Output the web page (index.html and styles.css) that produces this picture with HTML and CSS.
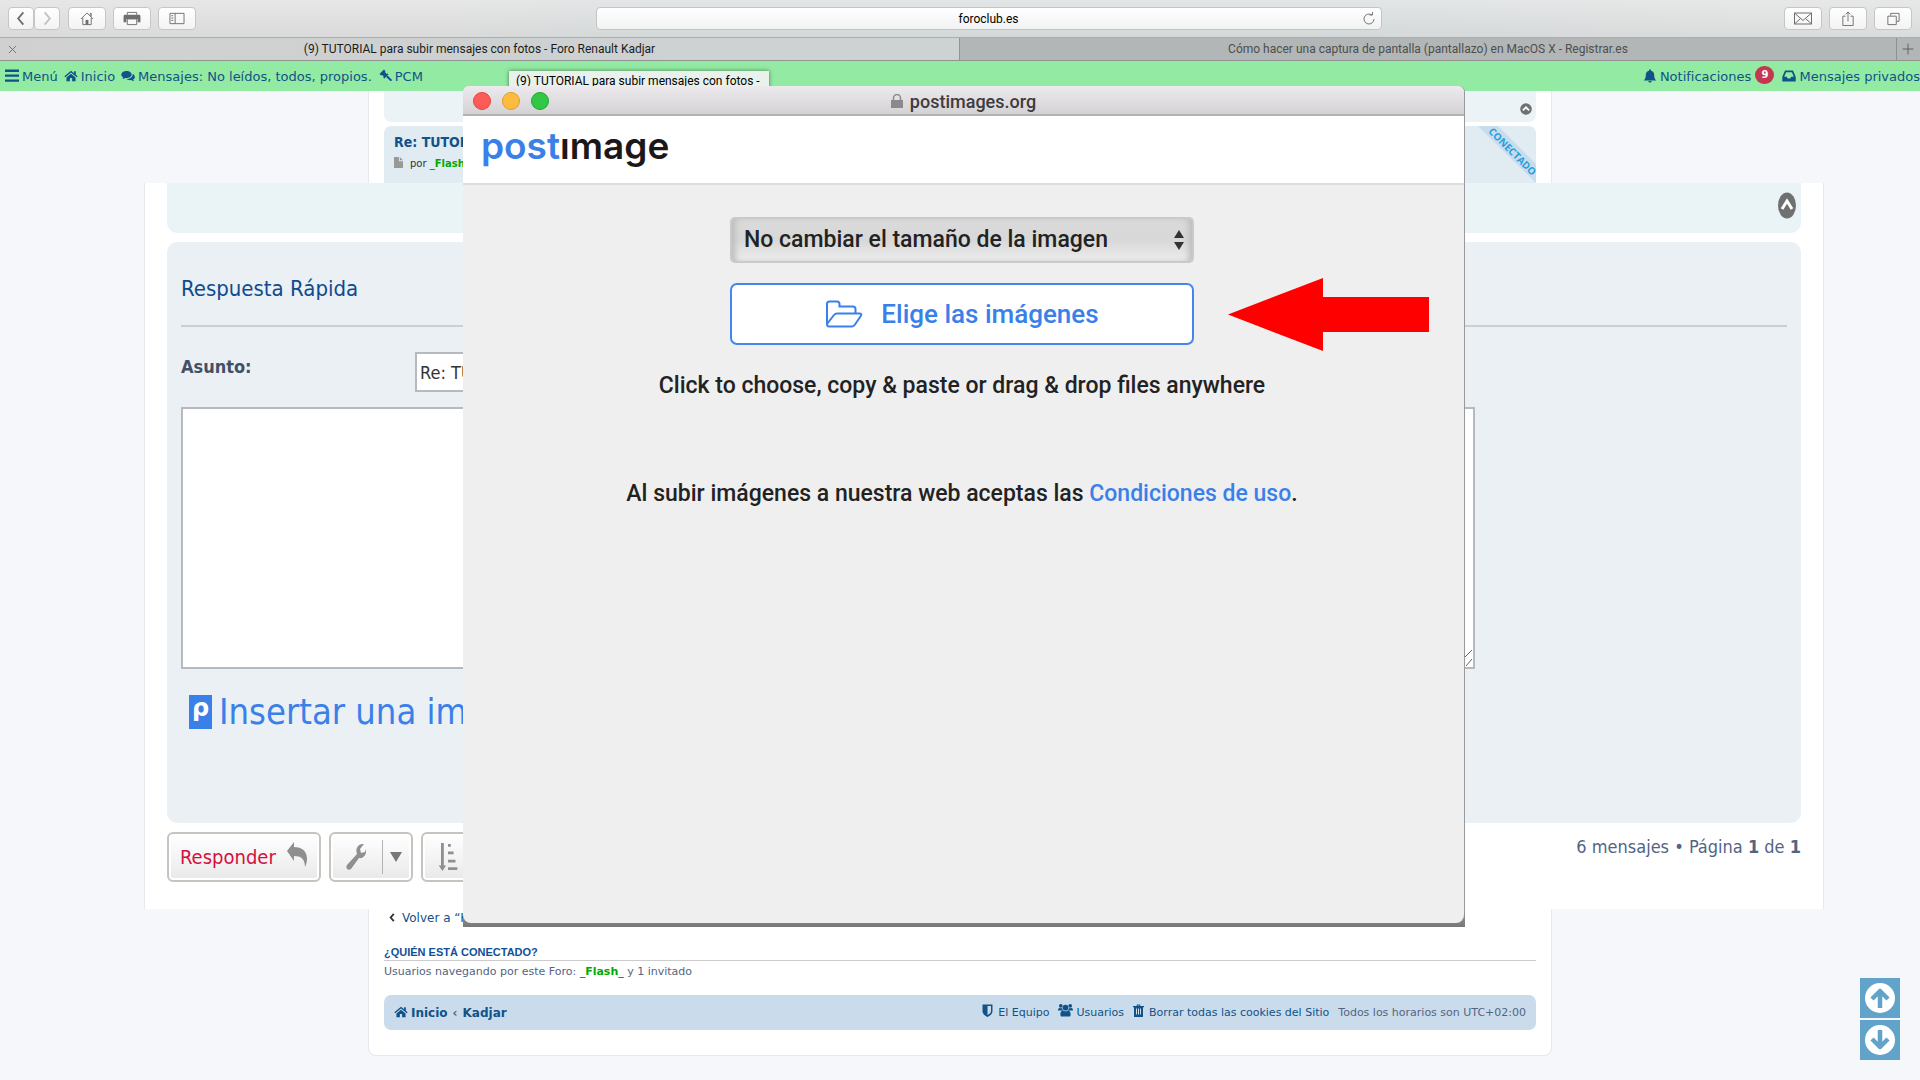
FILE: index.html
```html
<!DOCTYPE html>
<html lang="es">
<head>
    <meta charset="utf-8">
    <title>(9) TUTORIAL para subir mensajes con fotos - Foro Renault Kadjar</title>
    <link rel="stylesheet" href="styles.css">
</head>
<body>
    <!-- shared icons -->
    <svg class="sprite" aria-hidden="true">
        <symbol id="i-home" viewBox="0 0 16 14"><path d="M8 1 0.400 7.400l1 1.100L8 3.100l6.600 5.400 1-1.100L13.500 5.600V1.500h-2v2.400zM8 4.300 2.800 8.600V13h3.900V9.400h2.600V13h3.900V8.600z"/></symbol>
        <symbol id="i-comments" viewBox="0 0 18 15"><path d="M7 1C3.200 1 0.300 3 0.300 5.700c0 1.500 1 2.900 2.500 3.700-.2.900-.8 1.500-1.300 2 1.500 0 2.800-.6 3.800-1.300.5.100 1.100.2 1.700.2 3.800 0 6.700-2 6.700-4.600S10.800 1 7 1z"/><path d="M14.800 4.500c.1.400.2.800.2 1.200 0 3.300-3.500 5.800-8 5.800 1.100.9 2.700 1.400 4.400 1.400.6 0 1.100-.1 1.700-.2 1 .8 2.300 1.300 3.800 1.400-.6-.6-1-1.200-1.300-2 1.400-.8 2.200-2 2.200-3.300 0-1.800-1.200-3.400-3-4.300z"/></symbol>
        <symbol id="i-gavel" viewBox="0 0 16 16"><path d="M6.800.6 8.500 2.300 8 3.500l2 2.100 1.100-.5.900.9-5 5-.9-1 .5-1.100-2-2-1.200.4L1.700 5.600zM9.300 9l1.700-1.600 4.500 4.500c.5.500.4 1.100 0 1.500-.5.500-1.100.5-1.600 0z"/></symbol>
        <symbol id="i-bell" viewBox="0 0 14 15"><path d="M7 .4c.6 0 1 .4 1 1v.4c2.300.5 3.500 2.300 3.500 4.700 0 3 .7 4.500 2.200 5.700H.3c1.500-1.200 2.200-2.700 2.200-5.700C2.500 4.100 3.700 2.300 6 1.800v-.4c0-.6.4-1 1-1zM5.200 12.800h3.600c-.2 1-.9 1.700-1.800 1.700s-1.600-.7-1.800-1.700z"/></symbol>
        <symbol id="i-inbox" viewBox="0 0 14 12"><path fill-rule="evenodd" d="M3 .5h8l2.700 6.300V11.500H.3V6.800zM4.100 2.200 2.200 6.800h2.600l.9 1.700h2.600l.9-1.700h2.600L9.900 2.200z"/></symbol>
        <symbol id="i-up" viewBox="0 0 14 14"><circle cx="7" cy="7" r="6.800"/><path d="m3.400 8.600 3.600-3.600 3.600 3.600" fill="none" stroke="#fff" stroke-width="2.200"/></symbol>
        <symbol id="i-arrow" viewBox="0 0 30 30"><circle cx="15" cy="15" r="15" fill="#fff"/><path d="M15 25V8M7 16l8-8 8 8" fill="none" stroke="#62a3ca" stroke-width="4.500" stroke-linejoin="round"/></symbol>
    </svg>

    <header class="browser">
        <div class="toolbar">
            <div class="tools">
                <div class="pair">
                    <button class="tool back" aria-label="Atrás"><svg viewBox="0 0 10 16"><path d="M7.500 1.500 2 8l5.500 6.500"/></svg></button>
                    <button class="tool forward" aria-label="Adelante"><svg viewBox="0 0 10 16"><path d="M2.500 1.500 8 8l-5.500 6.500"/></svg></button>
                </div>
                <button class="tool" aria-label="Inicio"><svg viewBox="0 0 16 16"><path d="M1.500 8.500 8 2l6.500 6.500M3.500 7v7.500h9V7M11.500 5V2.500h1V6"/><path class="fill" d="M6.500 9.500h3v5h-3z"/></svg></button>
                <button class="tool" aria-label="Imprimir"><svg class="wide" viewBox="0 0 18 16"><path d="M4 4V1.500h10V4"/><path class="fill" d="M1.500 4h15c.8 0 1.500.7 1.500 1.500V12h-3V8.500H3V12H0V5.500C0 4.700.7 4 1.500 4z"/><path d="M4 8.500h10v6H4z"/></svg></button>
                <button class="tool" aria-label="Barra lateral"><svg viewBox="0 0 16 16"><path d="M.5 2.500h15v11H.5zM6 2.500v11M2 5h2M2 7.500h2M2 10h2"/></svg></button>
            </div>
            <label class="address">
                <input type="text" value="foroclub.es" aria-label="Dirección">
                <svg viewBox="0 0 14 14"><path d="M12 7a5 5 0 1 1-2-4M7.500 3h3V0"/></svg>
            </label>
            <div class="tools right">
                <button class="tool" aria-label="Correo"><svg class="wide" viewBox="0 0 18 14"><path d="M.5 1.500h17v11H.5zM.5 1.500 9 9l8.500-7.500M.5 12.500 6.500 7M17.500 12.500l-6-5.500"/></svg></button>
                <button class="tool" aria-label="Compartir"><svg viewBox="0 0 16 16"><path d="M5.500 5.500h-3v10h11v-10h-3M8 11V1M5.500 3.500 8 1l2.500 2.500"/></svg></button>
                <button class="tool" aria-label="Pestañas"><svg viewBox="0 0 16 16"><path d="M2.500 5.500h9v9h-9zM5.500 5V2.500h9v8.500H12"/></svg></button>
            </div>
        </div>
        <nav class="tabs">
            <a class="tab active" href="#"><svg class="close" viewBox="0 0 10 10"><path d="m1 1 8 8M9 1 1 9"/></svg>(9) TUTORIAL para subir mensajes con fotos - Foro Renault Kadjar</a>
            <a class="tab" href="#">Cómo hacer una captura de pantalla (pantallazo) en MacOS X - Registrar.es</a>
            <button class="new-tab" aria-label="Nueva pestaña"><svg viewBox="0 0 12 12"><path d="M6 .5v11M.5 6h11"/></svg></button>
        </nav>
    </header>

    <nav class="forum-bar">
        <div class="forum-links">
            <a href="#"><svg class="icon" viewBox="0 0 13 12"><path d="M0 0h13v2.200H0zM0 4.600h13v2.200H0zM0 9.200h13v2.200H0z"/></svg>Menú</a>
            <a href="#"><svg class="icon"><use href="#i-home"/></svg>Inicio</a>
            <span><svg class="icon"><use href="#i-comments"/></svg>Mensajes: <a href="#">No leídos</a>, <a href="#">todos</a>, <a href="#">propios</a>.</span>
            <a href="#"><svg class="icon"><use href="#i-gavel"/></svg>PCM</a>
        </div>
        <div class="forum-user">
            <a href="#"><svg class="icon"><use href="#i-bell"/></svg>Notificaciones <b class="badge">9</b></a>
            <a href="#"><svg class="icon"><use href="#i-inbox"/></svg>Mensajes privados</a>
        </div>
    </nav>

    <main>
        <section class="posts">
            <div class="post-end"><svg class="up"><use href="#i-up"/></svg></div>
            <article class="post">
                <h3><a href="#">Re: TUTORIAL</a></h3>
                <p><svg class="page" viewBox="0 0 10 12"><path d="M0 0h5.500v4.500H10V12H0zM6.500 0 10 3.500H6.500z"/></svg>por <a class="user" href="#">_Flash_</a></p>
                <svg class="ribbon" viewBox="0 0 58 57"><path d="M0 0h20l38 38v19z" fill="#c9dcec"/><text x="34" y="29" transform="rotate(45 34 26)">CONECTADO</text></svg>
            </article>
        </section>

        <section class="reply">
            <div class="reply-top"><svg class="up" viewBox="0 0 18 27"><ellipse cx="9" cy="13.500" rx="9" ry="13"/><path d="m4 17 5-8 5 8" fill="none" stroke="#fff" stroke-width="3"/></svg></div>
            <form class="quick">
                <h2>Respuesta Rápida</h2>
                <div class="subject">
                    <label for="subject">Asunto:</label>
                    <input id="subject" type="text" value="Re: TUTORIAL">
                </div>
                <div class="message">
                    <textarea aria-label="Mensaje"></textarea>
                    <svg viewBox="0 0 12 18"><path d="M1 11 11 1M5 17l6-7"/></svg>
                </div>
                <a class="insert" href="#"><span class="mark">ρ</span>Insertar una imagen</a>
            </form>
            <div class="actions">
                <button class="action answer">Responder<svg viewBox="0 0 20 26"><path d="M0 9 7 0v5c8 0 13 4 13 12 0 3-1 6-2 8 0-8-4-11-11-11v5z"/></svg></button>
                <button class="action tools-menu" aria-label="Herramientas"><svg viewBox="0 0 20 28"><path d="M1 22 11 11C9 6 12 0 18 1l-4 5 1 4 4-1 1-3c1 6-3 10-7 9L5 26c-3 2-6-1-4-4z"/></svg><span class="caret"></span></button>
                <button class="action" aria-label="Ordenar"><svg viewBox="0 0 20 30"><path d="M2.500 0h3v24H8l-4 6-4-6h2.500zM10 1h3v3h-3zM10 9h6v3h-6zM10 18h8v3h-8zM10 26h10v3H10z"/></svg></button>
                <p class="pages">6 mensajes • Página <b>1</b> de <b>1</b></p>
            </div>
        </section>

        <section class="bottom">
            <p class="return"><svg viewBox="0 0 6 10"><path d="M5 1 1.500 5 5 9"/></svg><a href="#">Volver a “Kadjar”</a></p>
            <h3>¿QUIÉN ESTÁ CONECTADO?</h3>
            <p class="online">Usuarios navegando por este Foro: <a class="user" href="#">_Flash_</a> y 1 invitado</p>
            <footer class="foot">
                <div class="crumbs"><a href="#"><svg class="icon"><use href="#i-home"/></svg>Inicio</a><span>‹</span><a href="#">Kadjar</a></div>
                <div class="foot-links">
                    <a href="#"><svg viewBox="0 0 10 13"><path fill-rule="evenodd" d="M0 .5h10V7c0 3-2.500 4.700-5 6-2.500-1.300-5-3-5-6zM5 2v9c2-1 3.500-2.300 3.500-4V2z"/></svg>El Equipo</a>
                    <a href="#" class="members"><svg viewBox="0 0 16 14"><circle cx="3" cy="2.500" r="2"/><circle cx="13" cy="2.500" r="2"/><circle cx="8" cy="4.500" r="3"/><path d="M0 7.500C0 5.500.7 4.500 2 4.800c.8.500 1.700.4 2.400 0C4.500 6 5 6.800 5.300 7.500zM16 7.500c0-2-.7-3-2-2.700-.8.500-1.700.4-2.400 0-.1 1.200-.6 2-.9 2.700zM2.500 12c0-2.500.8-4.500 3-4.500 1.500 1.200 3.500 1.200 5 0 2.200 0 3 2 3 4.500 0 1.300-.8 2-2 2h-7c-1.200 0-2-.7-2-2z"/></svg>Usuarios</a>
                    <a href="#"><svg viewBox="0 0 11 13"><path fill-rule="evenodd" d="M3.500 2 4 .5h3L7.500 2H11v1.200h-1V13H1V3.200H0V2zM4.700 2h1.600l-.2-.5H4.900zM3 4.500v6h1v-6zM5 4.500v6h1v-6zM7 4.500v6h1v-6z"/></svg>Borrar todas las cookies del Sitio</a>
                    <span>Todos los horarios son UTC+02:00</span>
                </div>
            </footer>
        </section>
    </main>

    <div class="tooltip">(9) TUTORIAL para subir mensajes con fotos -</div>

    <!-- image upload window -->
    <div class="popup">
        <div class="window">
            <div class="titlebar">
                <span class="lights"><i class="red"></i><i class="yellow"></i><i class="green"></i></span>
                <span class="site"><svg viewBox="0 0 12 14"><path d="M0 6h12v8H0z"/><path d="M2.500 6.500V4a3.500 3.500 0 0 1 7 0v2.500" fill="none" stroke="#8b898b" stroke-width="1.500"/></svg>postimages.org</span>
            </div>
            <div class="brand"><a href="#"><span>post</span>ımage</a></div>
            <div class="upload">
                <label class="resize">
                    <select aria-label="Tamaño de la imagen"><option>No cambiar el tamaño de la imagen</option></select>
                    <svg viewBox="0 0 10 20"><path d="M5 0l5 8H0zM5 20l5-8H0z"/></svg>
                </label>
                <button class="choose"><svg viewBox="0 0 38 28"><path d="M2 24V4c0-1.500.8-2.500 2.500-2.500h7.500c1.500 0 2.500 1 2.500 2.500v2.500H28c1.500 0 2.500 1 2.500 2.500v4.500M2 24l7-9c.8-1 1.500-1.500 3-1.500h22.500c1.800 0 2.300 1 1.300 2.500L30 24.500c-.8 1.200-1.500 2-3 2H4c-1.500 0-2-1-2-2.500z"/></svg>Elige las imágenes</button>
                <p>Click to choose, copy &amp; paste or drag &amp; drop files anywhere</p>
                <p class="terms">Al subir imágenes a nuestra web aceptas las <a href="#">Condiciones de uso</a>.</p>
            </div>
            <svg class="pointer" viewBox="0 0 201 73"><path d="M0 36.500 95 0v19h106v35H95v19z"/></svg>
        </div>
    </div>

    <div class="scroll-links">
        <a href="#" aria-label="Subir"><svg><use href="#i-arrow"/></svg></a>
        <a href="#" aria-label="Bajar" class="down"><svg><use href="#i-arrow"/></svg></a>
    </div>
</body>
</html>
```

FILE: styles.css
```css
* {
    box-sizing: border-box;
}
body {
    margin: 0;
    min-height: 100vh;
    overflow: hidden;
    position: relative;
    background: #f5f7fa;
    color: #536482;
    font-family: "DejaVu Sans", sans-serif;
    font-size: 11px;
}
a {
    color: #105289;
    text-decoration: none;
}
p, h2, h3 {
    margin: 0;
}
button, input, select, textarea {
    font: inherit;
    color: inherit;
}
.sprite {
    position: absolute;
    width: 0;
    height: 0;
}
.icon {
    width: 14px;
    height: 14px;
    fill: #105289;
    vertical-align: -2px;
    margin-right: 3px;
}
.user {
    color: #00aa00;
    font-weight: bold;
}

/* browser */
.browser {
    font-family: Roboto, sans-serif;
    font-size: 12px;
}
.toolbar {
    display: grid;
    grid-template-columns: 1fr 786px 530px;
    align-items: center;
    height: 37px;
    padding: 0 8px;
    background: linear-gradient(rgba(255, 255, 255, 0.35), rgba(255, 255, 255, 0)), linear-gradient(90deg, #dadada 0%, #dadada 22%, #d3d8d9 35%, #d3d8d9 70%, #dadbdb 90%);
}
.tools {
    display: flex;
    gap: 7px;
}
.tools.right {
    justify-content: flex-end;
}
.pair {
    display: flex;
    margin-right: 1px;
}
.tool {
    display: flex;
    align-items: center;
    justify-content: center;
    width: 38px;
    height: 23px;
    padding: 0;
    border: 1px solid #c5c7c7;
    border-radius: 4px;
    background: linear-gradient(#ffffff, #f3f3f3);
}
.pair .tool {
    width: 26px;
}
.tool svg {
    width: 16px;
    height: 15px;
    fill: none;
    stroke: #6e6e6e;
}
.tool svg.wide {
    width: 18px;
}
.tool .fill {
    fill: #6e6e6e;
    stroke: none;
}
.tool.back svg {
    stroke-width: 2;
}
.tool.forward svg {
    stroke: #c2c2c2;
    stroke-width: 2;
}
.address {
    display: flex;
    align-items: center;
    height: 23px;
    padding-right: 5px;
    border: 1px solid #c2c6c6;
    border-radius: 4px;
    background: linear-gradient(#ffffff, #f1f2f2);
}
.address input {
    flex: 1;
    min-width: 0;
    padding: 0 0 0 18px;
    border: 0;
    background: none;
    color: #000;
    text-align: center;
}
.address svg {
    width: 14px;
    height: 14px;
    fill: none;
    stroke: #777;
}
.tabs {
    display: flex;
    height: 24px;
    border-top: 1px solid #abaeae;
    border-bottom: 1px solid #919494;
    background: #b2b6b6;
}
.tab {
    flex: 1;
    position: relative;
    line-height: 23px;
    text-align: center;
    color: #4c4f4f;
}
.tab.active {
    flex: 0 0 50%;
    border-right: 1px solid #909494;
    background: linear-gradient(90deg, #d0d0d0, #cdd2d2);
    color: #1c1c1c;
}
.close {
    position: absolute;
    left: 8px;
    top: 7px;
    width: 9px;
    height: 9px;
    stroke: #6c6c6c;
}
.new-tab {
    width: 24px;
    padding: 0 5px;
    border: 0;
    border-left: 1px solid #8e9191;
    background: none;
}
.new-tab svg {
    display: block;
    width: 12px;
    height: 12px;
    stroke: #606262;
}

/* forum top bar */
.forum-bar {
    display: flex;
    justify-content: space-between;
    height: 30px;
    line-height: 32px;
    padding-left: 5px;
    background: #93eaa3;
    color: #105289;
    font-size: 13px;
    white-space: nowrap;
}
.forum-links {
    display: flex;
    gap: 6px;
}
.forum-user {
    display: flex;
    gap: 8px;
    flex: 0 0 268px;
}
.badge {
    display: inline-block;
    width: 19px;
    height: 18px;
    border-radius: 9px;
    background: #c4384f;
    color: #fff;
    font-size: 10px;
    line-height: 18px;
    text-align: center;
    vertical-align: 3px;
}

/* last posts */
.posts {
    max-width: 1184px;
    height: 92px;
    margin: 0 auto;
    padding: 0 15px;
    border: solid #e6e9ed;
    border-width: 0 1px;
    background: #fff;
}
.post-end {
    display: flex;
    justify-content: flex-end;
    height: 31px;
    padding: 12px 4px 0;
    border-radius: 0 0 7px 7px;
    background: #ebf3f7;
}
.post-end .up {
    width: 12px;
    height: 12px;
    fill: #707070;
}
.post {
    position: relative;
    height: 57px;
    margin-top: 4px;
    padding: 7px 10px;
    border-radius: 7px 7px 0 0;
    background: #e1ebf2;
    color: #333;
    font-size: 10px;
}
.post h3 {
    font-family: "DejaVu Sans Condensed", "DejaVu Sans", sans-serif;
    font-size: 14px;
    line-height: 18px;
    margin-bottom: 6px;
}
.page {
    width: 9px;
    height: 11px;
    margin-right: 7px;
    fill: #999;
    vertical-align: -1px;
}
.ribbon {
    position: absolute;
    right: 0;
    top: 0;
    width: 58px;
    height: 57px;
}
.ribbon text {
    font-family: "Open Sans", sans-serif;
    font-size: 10px;
    font-weight: 700;
    fill: #1ba1e2;
    text-anchor: middle;
}

/* quick reply */
.reply {
    height: 726px;
    margin: 0 96px 0 144px;
    padding: 0 22px;
    border: solid #e6e9ed;
    border-width: 0 1px;
    background: #fff;
    font-family: "DejaVu Sans Condensed", "DejaVu Sans", sans-serif;
    font-size: 18px;
}
.reply-top {
    display: flex;
    justify-content: flex-end;
    height: 50px;
    padding: 9px 5px 0;
    border-radius: 0 0 10px 10px;
    background: #eaf3f6;
}
.reply-top .up {
    width: 18px;
    height: 27px;
    fill: #707070;
}
.quick {
    height: 581px;
    margin-top: 9px;
    padding: 25px 14px 0;
    border-radius: 10px;
    background: #eaf0f3;
}
.quick h2 {
    height: 60px;
    border-bottom: 2px solid #cccfd0;
    color: #104a90;
    font-size: 22px;
    font-weight: normal;
    line-height: 44px;
}
.subject {
    display: flex;
    height: 55px;
    margin-top: 25px;
    color: #333;
}
.subject label {
    width: 234px;
    color: #425067;
    font-weight: bold;
    line-height: 30px;
}
.subject input {
    flex: 0 0 600px;
    height: 40px;
    padding: 0 3px;
    border: 2px solid #b4babf;
    background: #fff;
}
.message {
    position: relative;
    width: 1294px;
    height: 262px;
}
.message textarea {
    display: block;
    width: 100%;
    height: 100%;
    border: 2px solid #b4babf;
    background: #fff;
    resize: none;
}
.message svg {
    position: absolute;
    right: 2px;
    bottom: 2px;
    width: 12px;
    height: 18px;
    fill: none;
    stroke: #666;
}
.insert {
    display: flex;
    align-items: center;
    gap: 7px;
    margin-top: 13px;
    padding-left: 8px;
    color: #3a80e9;
    font-size: 36px;
    line-height: 60px;
}
.mark {
    width: 23px;
    height: 34px;
    background: #3a80e9;
    color: #fff;
    font-family: "DejaVu Sans", sans-serif;
    font-size: 24px;
    font-weight: bold;
    line-height: 26px;
    text-align: center;
}
.actions {
    display: flex;
    gap: 8px;
    margin-top: 9px;
}
.action {
    display: flex;
    align-items: center;
    justify-content: space-between;
    width: 84px;
    height: 50px;
    padding: 0 13px 0 15px;
    border: 2px solid #c7c3bf;
    border-radius: 6px;
    background: linear-gradient(#ffffff, #e9e9e9);
    box-shadow: inset 0 0 0 2px #fff;
}
.action svg {
    flex: none;
    width: 20px;
    height: 28px;
    fill: #8f8f8f;
}
.answer {
    width: 154px;
    padding: 0 12px 0 11px;
    color: #d31141;
    font-size: 20px;
}
.answer svg {
    height: 26px;
    margin-bottom: 4px;
}
.tools-menu {
    padding-right: 9px;
}
.caret {
    display: flex;
    align-items: center;
    height: 34px;
    padding-left: 7px;
    border-left: 1px solid #b4b4b4;
}
.caret::before {
    content: "";
    border: 6px solid transparent;
    border-top: 10px solid #777;
    border-bottom: 0;
}
.pages {
    flex: 1;
    text-align: right;
    line-height: 30px;
}

/* page end */
.bottom {
    max-width: 1184px;
    height: 147px;
    margin: 0 auto;
    padding: 0 15px;
    border: 1px solid #e6e9ed;
    border-top: 0;
    border-radius: 0 0 8px 8px;
    background: #fff;
}
.return {
    padding-left: 5px;
    font-size: 12px;
    line-height: 18px;
}
.return svg {
    width: 6px;
    height: 9px;
    margin-right: 7px;
    fill: none;
    stroke: #333;
    stroke-width: 2;
}
.bottom h3 {
    margin-top: 17px;
    border-bottom: 1px solid #ccc;
    color: #115098;
    font-family: "Liberation Sans", sans-serif;
    font-size: 11px;
    line-height: 16px;
}
.online {
    line-height: 21px;
}
.foot {
    display: flex;
    justify-content: space-between;
    height: 35px;
    margin-top: 13px;
    padding: 0 10px;
    border-radius: 7px;
    background: #cadceb;
    line-height: 36px;
}
.crumbs {
    display: flex;
    gap: 5px;
    font-size: 12px;
    font-weight: bold;
}
.foot-links {
    display: flex;
    gap: 9px;
}
.foot-links svg {
    width: 11px;
    height: 13px;
    margin-right: 5px;
    fill: #105289;
    vertical-align: -1px;
}
.foot-links .members svg {
    width: 15px;
    height: 14px;
    margin-right: 3px;
}

/* hovered tab title */
.tooltip {
    position: absolute;
    left: 509px;
    top: 71px;
    width: 260px;
    padding-left: 7px;
    background: #e8f1eb;
    box-shadow: 0 0 4px rgba(0, 0, 0, 0.5);
    color: #000;
    font-family: Roboto, sans-serif;
    font-size: 12px;
    line-height: 20px;
    white-space: nowrap;
}

/* upload window */
.popup {
    position: absolute;
    left: 463px;
    top: 86px;
    width: 1002px;
    padding: 0 1px 4px 0;
    border-radius: 6px 6px 0 0;
    background: linear-gradient(#999 98%, #777);
    color: #222;
    font-family: Roboto, sans-serif;
    font-size: 23px;
    font-weight: 500;
}
.window {
    position: relative;
    height: 837px;
    border-radius: 6px 6px 8px 8px;
    background: #efefef;
    overflow: hidden;
}
.titlebar {
    display: grid;
    grid-template-columns: 1fr auto 1fr;
    align-items: center;
    height: 30px;
    padding: 2px 10px 0;
    border-bottom: 2px solid #b5b2b5;
    background: linear-gradient(#edeaed, #d5d2d5);
}
.lights {
    display: flex;
    gap: 11px;
}
.lights i {
    width: 18px;
    height: 18px;
    border: 1px solid #e2463f;
    border-radius: 50%;
    background: #fc5b57;
}
.lights .yellow {
    border-color: #dfa023;
    background: #fdbc40;
}
.lights .green {
    border-color: #1fa82f;
    background: #33c748;
}
.site {
    color: #3d3b3d;
    font-size: 18px;
}
.site svg {
    width: 12px;
    height: 14px;
    margin-right: 7px;
    fill: #8b898b;
}
.brand {
    height: 69px;
    padding: 8px 18px;
    border-bottom: 2px solid #dddddd;
    background: #fff;
    font-family: Inter, sans-serif;
    font-size: 37px;
    font-weight: 600;
    line-height: 44px;
}
.brand a {
    color: #1c1819;
}
.brand span {
    color: #3a80e9;
}
.upload {
    display: flex;
    flex-direction: column;
    align-items: center;
    padding: 32px 0 0 0;
    margin-right: 3px;
}
.resize {
    position: relative;
    width: 464px;
}
.resize select {
    display: block;
    width: 100%;
    height: 46px;
    padding: 0 12px 2px;
    border: 2px solid #cacaca;
    border-radius: 5px;
    appearance: none;
    background: linear-gradient(#dadada, #d8d8d8 50%, #ececec);
    box-shadow: inset 6px 0 6px -3px #bbb, inset -6px 0 6px -3px #bbb;
}
.resize svg {
    position: absolute;
    right: 10px;
    top: 13px;
    width: 10px;
    height: 20px;
    fill: #333;
}
.choose {
    display: flex;
    align-items: center;
    justify-content: center;
    gap: 18px;
    width: 464px;
    height: 62px;
    margin: 20px 0 27px;
    border: 2px solid #4387ea;
    border-radius: 7px;
    background: #fff;
    color: #3a80e9;
    font-size: 26px;
}
.choose svg {
    width: 38px;
    height: 28px;
    fill: none;
    stroke: #3a80e9;
    stroke-width: 2;
}
.upload p {
    line-height: 28px;
}
.upload .terms {
    margin-top: 80px;
}
.terms a {
    color: #3a80e9;
}
.pointer {
    position: absolute;
    left: 765px;
    top: 192px;
    width: 201px;
    height: 73px;
    fill: #ff0000;
}

/* scroll shortcuts */
.scroll-links {
    position: absolute;
    right: 20px;
    bottom: 20px;
    display: grid;
    gap: 2px;
}
.scroll-links a {
    width: 40px;
    height: 40px;
    padding: 5px;
    background: #62a3ca;
}
.scroll-links svg {
    display: block;
    width: 30px;
    height: 30px;
}
.scroll-links .down svg {
    transform: rotate(180deg);
}
```
